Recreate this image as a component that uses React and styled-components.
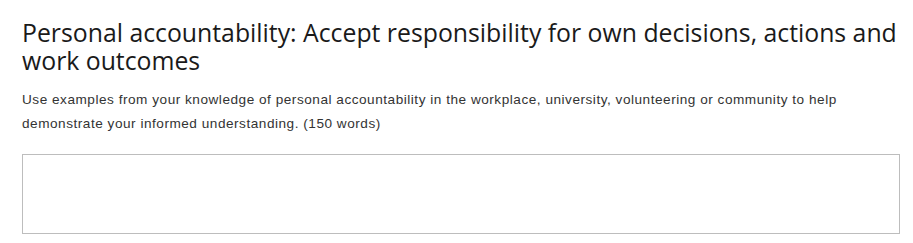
import React from 'react';
import styled, { createGlobalStyle } from 'styled-components';

const GlobalStyle = createGlobalStyle`
    html, body {
        margin: 0;
        padding: 0;
        background: #fff;
    }
`;

const Wrapper = styled.div`
    padding: 18px 8px 0 22px;
`;

const Title = styled.h2`
    font-family: 'Open Sans', sans-serif;
    font-weight: 400;
    font-size: 24.8px;
    line-height: 28px;
    color: #1a1a1a;
    margin: 0 0 14px 0;
`;

const Hint = styled.p`
    font-family: 'Liberation Sans', Arial, sans-serif;
    font-size: 13.6px;
    letter-spacing: 0.52px;
    line-height: 24px;
    color: #333;
    margin: 0 0 18px 0;
`;

const Answer = styled.textarea`
    display: block;
    box-sizing: border-box;
    width: 878px;
    height: 80px;
    border: 1px solid #bdbdbd;
    border-radius: 0;
    resize: none;
    padding: 8px;
    font-family: 'Liberation Sans', Arial, sans-serif;
    font-size: 14px;
    outline: none;
`;

function App() {
    return (
        <>
            <GlobalStyle />
            <Wrapper>
                <Title>
                    Personal accountability: Accept responsibility for own decisions, actions and work outcomes
                </Title>
                <Hint>
                    Use examples from your knowledge of personal accountability in the workplace, university, volunteering or community to help demonstrate your informed understanding. (150 words)
                </Hint>
                <Answer />
            </Wrapper>
        </>
    );
}

export default App;
